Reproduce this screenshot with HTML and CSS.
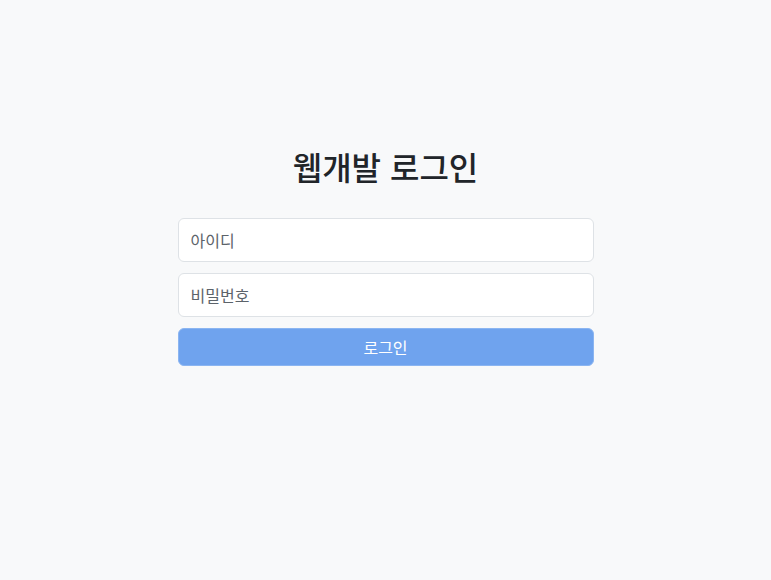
FILE: index.html
```html
<!DOCTYPE html>
<html lang="ko">
<head>
    <meta charset="UTF-8">
    <meta name="viewport" content="width=device-width, initial-scale=1.0">
    <title>웹개발 로그인</title>
    <link rel="stylesheet" href="styles.css">
</head>
<body>

    <!-- Login Box -->
    <div class="login-box">
        <h2 class="login-title">웹개발 로그인</h2>
        <form class="login-form" onsubmit="return false;">
            <input type="text" class="form-input" placeholder="아이디">
            <input type="password" class="form-input" placeholder="비밀번호">
            <button type="submit" class="login-btn" disabled>로그인</button>
        </form>
    </div>

</body>
</html>
```

FILE: styles.css
```css
/* Global Reset */
* {
    margin: 0;
    padding: 0;
    box-sizing: border-box;
}

body {
    font-family: 'Noto Sans CJK KR', 'Noto Sans', sans-serif;
    background-color: #f8f9fa;
    color: #212529;
    display: flex;
    justify-content: center;
    padding-top: 147px;
}

/* Login Box */
.login-box {
    width: 416px;
}

.login-title {
    font-size: 32px;
    font-weight: 500;
    line-height: 1.2;
    text-align: center;
    margin-bottom: 33px;
}

.login-form {
    display: flex;
    flex-direction: column;
    gap: 11px;
}

/* Inputs */
.form-input {
    width: 100%;
    height: 44px;
    padding: 10px 12px;
    font-family: inherit;
    font-size: 16px;
    color: #212529;
    background: #fff;
    border: 1px solid #dee2e6;
    border-radius: 6px;
    outline: none;
}

.form-input::placeholder {
    color: #5c636a;
}

/* Button */
.login-btn {
    height: 38px;
    font-family: inherit;
    font-size: 16px;
    color: #fff;
    background: #6fa3ee;
    border: 1px solid #8bb5f1;
    border-radius: 6px;
}
```
